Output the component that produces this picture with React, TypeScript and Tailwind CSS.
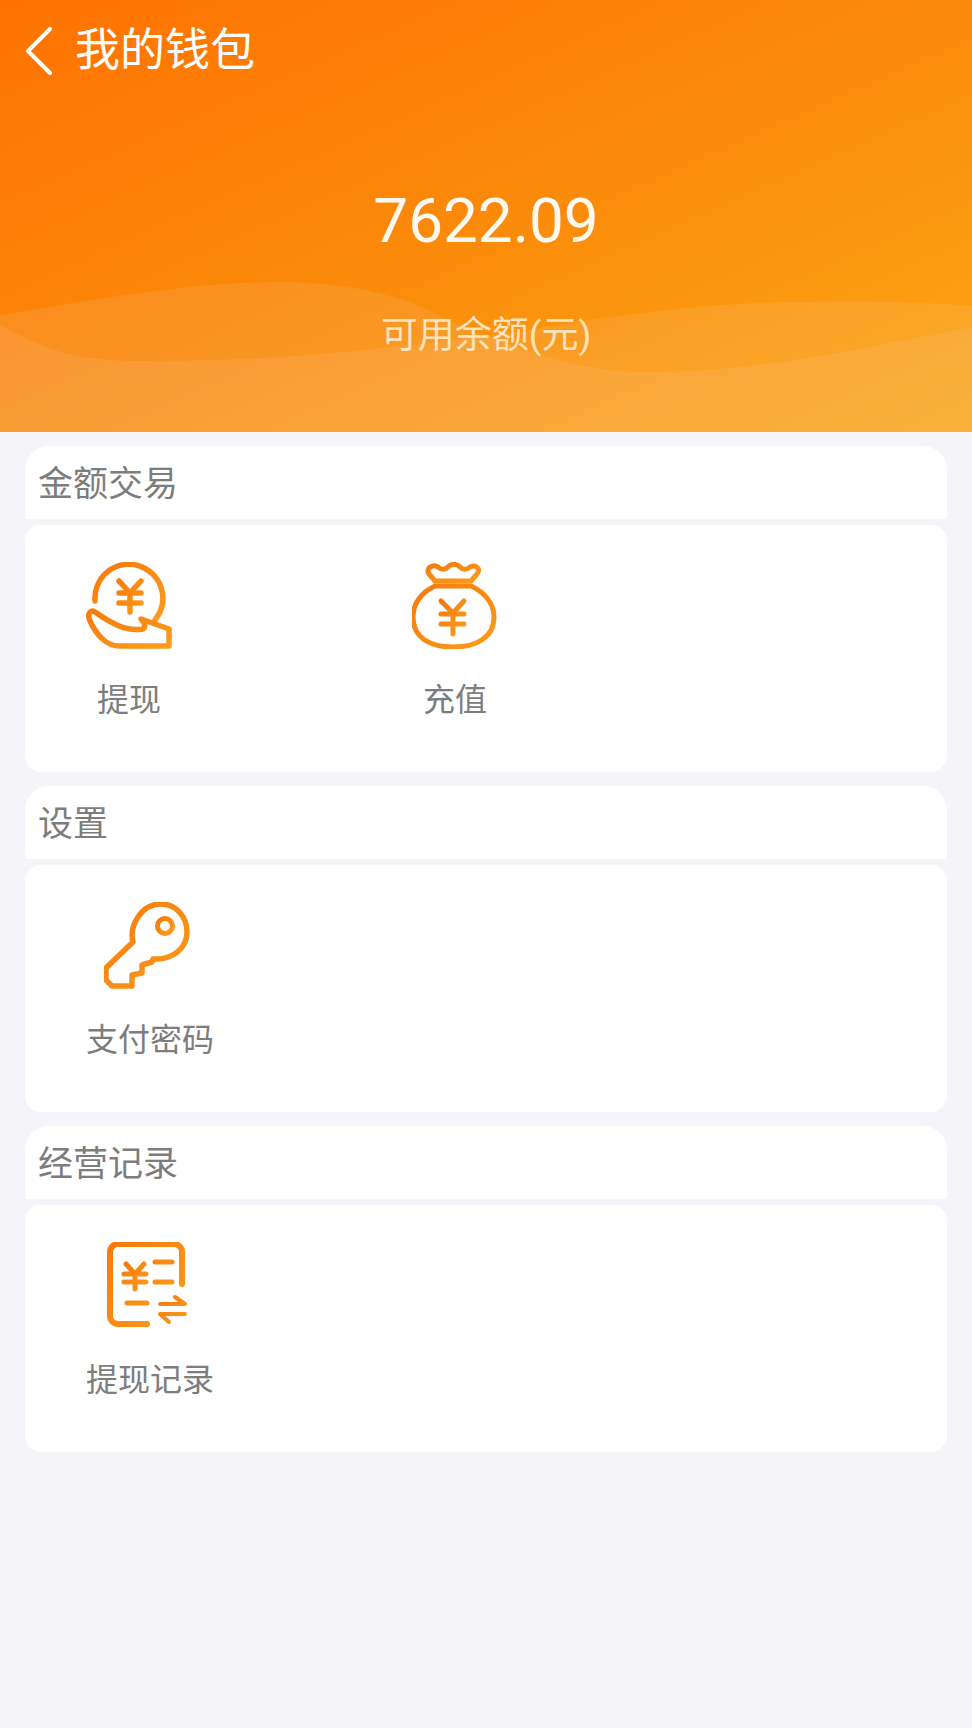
import React from 'react';

const FONT = "font-['Roboto','Noto_Sans_CJK_SC',sans-serif]";

const IconGradient = ({ id }: { id: string }) => (
  <defs>
    <linearGradient id={id} x1="0" y1="0" x2="1" y2="1">
      <stop offset="0%" stopColor="#f77a0c" />
      <stop offset="100%" stopColor="#fb9c1c" />
    </linearGradient>
  </defs>
);

const WithdrawIcon = () => (
  <svg width="87" height="87" viewBox="25 21 87 87" fill="none" stroke="url(#g1)" strokeWidth="5.5" strokeLinecap="round" strokeLinejoin="round">
    <IconGradient id="g1" />
    <path d="M34 60 A34 34 0 1 1 94 79" />
    <path d="M58 40 L69 52 L80 40 M58 52 H80 M58 62 H80 M69 52 V71" />
    <path d="M34 71 C29 68 26 73 29 80 C35 93 45 105 58 105 H108 V88 L80 78 C84 82 85 86 82 88 C70 90 58 88 34 71 Z" />
  </svg>
);

const BagIcon = () => (
  <svg width="87" height="87" viewBox="23 21 87 87" fill="none" stroke="url(#g2)" strokeWidth="5" strokeLinecap="round" strokeLinejoin="round">
    <IconGradient id="g2" />
    <path d="M46 40 L40 33 C36 27 44 23 49 26 C52 29 56 29 59 26 C62 22 68 23 71 26 C74 29 78 29 81 26 C87 23 92 28 88 33 L82 40 Z" />
    <path d="M46 45 H82 C95 51 105 62 105 76 C105 96 88 106 64 106 C40 106 24 96 24 76 C24 62 33 51 46 45 Z" />
    <path d="M52 60 L64 72 L75 60 M52 73 H75 M52 83 H75 M64 72 V93" />
  </svg>
);

const KeyIcon = () => (
  <svg width="87" height="87" viewBox="15 12 87 87" fill="none" stroke="url(#g3)" strokeWidth="5.5" strokeLinecap="round" strokeLinejoin="round">
    <IconGradient id="g3" />
    <path d="M44 52 C40 36 52 14 72 14 C88 14 98 28 98 42 C98 58 84 70 64 69 L63 72 L53 75 V83 L43 85 V96 H23 L17 90 V78 Z" />
    <circle cx="76" cy="36" r="7.5" strokeWidth="5" />
  </svg>
);

const RecordIcon = () => (
  <svg width="87" height="87" viewBox="15 13 87 87" fill="none" stroke="url(#g4)" strokeWidth="6" strokeLinecap="round" strokeLinejoin="round">
    <IconGradient id="g4" />
    <path d="M58 95 H29 A8 8 0 0 1 21 87 V23 A8 8 0 0 1 29 15 H85 A8 8 0 0 1 93 23 V55" />
    <path d="M37 35 L46 45 L55 35 M35 45 H57 M35 53 H57 M46 45 V60" strokeWidth="5" />
    <path d="M66 33 H83 M66 53 H83 M38 74 H58" strokeWidth="5" />
    <path d="M71 75 H96 L86 68 M71 85 H96 M71 85 L80 93" strokeWidth="4" />
  </svg>
);

const Section = ({ title, children }: { title: string; children: React.ReactNode }) => (
  <section className="mx-[25px] mb-[14px]">
    <div className="h-[73px] rounded-t-[24px] bg-white pl-[13px] flex items-center text-[35px] text-[#7d7d7d] pt-[6px]">
      {title}
    </div>
    <div className="mt-[6px] h-[247px] rounded-[16px] bg-white flex items-start pt-[37px]">
      {children}
    </div>
  </section>
);

const Item = ({ label, icon, className }: { label: string; icon: React.ReactNode; className: string }) => (
  <div className={`flex flex-col items-center ${className}`}>
    {icon}
    <span className="mt-[28px] text-[32px] leading-[46px] text-[#7d7d7d]">{label}</span>
  </div>
);

export default function App() {
  return (
    <div className={`min-h-[1728px] bg-[#f4f4f9] ${FONT}`}>
      <header className="relative h-[432px] overflow-hidden bg-gradient-to-br from-[#ff7200] via-[#fb8a0a] to-[#fba814]">
        <svg className="absolute inset-0" width="972" height="432" viewBox="0 0 972 432">
          <path d="M0 315 C90 300 190 282 279 282 C340 282 385 292 421 307 C480 335 560 372 650 372 C760 372 880 345 972 327 V432 H0 Z" fill="#f7d9c4" fillOpacity="0.12" />
          <path d="M0 325 C30 340 60 360 130 361 C230 362 320 355 384 348 C440 342 500 335 558 325 C650 310 730 302 806 302 C870 301 930 302 972 306 V432 H0 Z" fill="#f7d9c4" fillOpacity="0.12" />
        </svg>
        <div className="relative flex items-center pl-[25px] pt-[27px]">
          <svg width="28" height="48" viewBox="0 0 28 48" fill="none" stroke="#fff" strokeWidth="4" strokeLinecap="round" strokeLinejoin="round">
            <path d="M25 2 L3 24 L25 46" />
          </svg>
          <span className="ml-[22px] text-[45px] leading-[48px] text-white">我的钱包</span>
        </div>
        <div className="relative mt-[108px] text-center text-[62px] leading-[76px] text-white/95">7622.09</div>
        <div className="relative mt-[53px] text-center text-[37px] leading-[48px] text-[#fde3bd]">可用余额(元)</div>
      </header>

      <div className="pt-[14px]">
        <Section title="金额交易">
          <Item label="提现" icon={<WithdrawIcon />} className="ml-[60px] w-[88px]" />
          <Item label="充值" icon={<BagIcon />} className="ml-[238px] w-[88px]" />
        </Section>
        <Section title="设置">
          <Item label="支付密码" icon={<span className="block ml-[-6px]"><KeyIcon /></span>} className="ml-[61px] w-[128px]" />
        </Section>
        <Section title="经营记录">
          <Item label="提现记录" icon={<span className="block ml-[-6px]"><RecordIcon /></span>} className="ml-[61px] w-[128px]" />
        </Section>
      </div>
    </div>
  );
}
